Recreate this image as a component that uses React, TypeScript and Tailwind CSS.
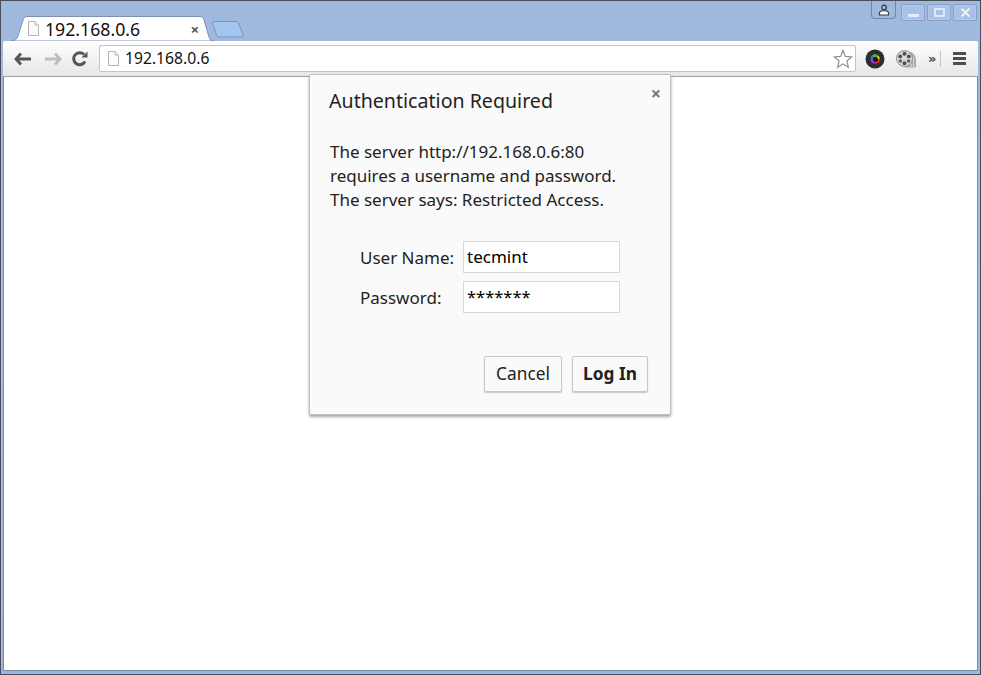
import React from "react";

const FileIcon = () => (
  <svg width="13" height="16" viewBox="0 0 13 16" className="shrink-0">
    <path d="M1.5 0.5H8L11.5 4V14.5H1.5Z" fill="#fbfbfb" stroke="#b4b4b4" />
    <path d="M8 0.5V4H11.5" fill="#eeeeee" stroke="#b4b4b4" />
  </svg>
);

const WinBtn = ({ children }: { children: React.ReactNode }) => (
  <div className="w-[24px] h-[17px] border border-[#86a0c9] rounded-[2px] bg-[#a9c1e6] shadow-[inset_0_0_0_1px_#b4c9ea] flex items-center justify-center">
    {children}
  </div>
);

export default function App() {
  return (
    <div className="w-[981px] h-[675px] overflow-hidden relative flex flex-col bg-gradient-to-b from-[#9fb8dd] via-[#a8c0e5] to-[#9db6dc] border border-[#4a4f57] font-['Noto_Sans',sans-serif]">
      <div className="h-[40px] shrink-0 flex relative">
        <div className="w-[203px] h-[25px] ml-[10px] mt-[15px] relative flex items-center pl-[16px] pr-[15px] pt-[2px] z-10">
          <svg width="203" height="25" viewBox="0 0 203 25" className="absolute left-0 top-0">
            <path d="M0 25C4 25 6 23 7 20L12 4C13 1 14 0.5 17 0.5H188C191 0.5 192 1 193 4L198 21C199 24 200 25 203 25Z" fill="#ffffff" stroke="#7b90b2" />
          </svg>
          <div className="relative flex items-center w-full">
            <FileIcon />
            <span className="ml-[5px] text-[17.7px] text-[#111] leading-none flex-1">192.168.0.6</span>
            <span className="text-[#555] font-bold text-[15px] leading-none">×</span>
          </div>
        </div>
        <svg width="33" height="17" viewBox="0 0 33 17" className="mt-[20px] -ml-[3px]">
          <path d="M1.5 2C1 1 1.5 0.5 3 0.5H25C26.5 0.5 27 1 27.5 2L32 14C32.5 15.5 32 16 30.5 16H8C6.5 16 6 15.5 5.5 14Z" fill="#a3c6f0" stroke="#7b93ba" />
        </svg>
        <div className="ml-auto mr-[3px] flex items-start">
          <div className="w-[25px] h-[18px] mr-[5px] border border-t-0 border-[#6f88b2] rounded-b-[4px] flex items-center justify-center">
            <svg width="12" height="12" viewBox="0 0 12 12">
              <circle cx="6" cy="3.5" r="2.3" fill="none" stroke="#343a44" strokeWidth="1.2" />
              <path d="M1.5 11V9C1.5 7.8 3 7 4.5 6.8H7.5C9 7 10.5 7.8 10.5 9V11Z" fill="#fff" stroke="#343a44" strokeWidth="1.1" />
            </svg>
          </div>
          <div className="flex gap-[2px] mt-[3px]">
            <WinBtn><div className="w-[11px] h-[3px] mt-[6px] bg-[#e6edf8]" /></WinBtn>
            <WinBtn><div className="w-[11px] h-[9px] border-2 border-[#dfe8f6] rounded-[1px]" /></WinBtn>
            <WinBtn>
              <svg width="11" height="9" viewBox="0 0 11 9"><path d="M1.5 0.5L9.5 8.5M9.5 0.5L1.5 8.5" stroke="#eef3fb" strokeWidth="2" /></svg>
            </WinBtn>
          </div>
        </div>
      </div>

      <div className="h-[36px] shrink-0 mx-[2px] bg-gradient-to-b from-white to-[#e6e6e6] border-b border-[#a0a0a0] rounded-t-[2px] flex items-center pl-[11px] pr-[9px]">
        <svg width="18" height="14" viewBox="0 0 18 14" className="mr-[12px]">
          <path d="M7 1.5L2 7L7 12.5M2.5 7H17" fill="none" stroke="#555" strokeWidth="2.8" />
        </svg>
        <svg width="18" height="14" viewBox="0 0 18 14" className="mr-[10px]">
          <path d="M11 1.5L16 7L11 12.5M15.5 7H1" fill="none" stroke="#bdbdbd" strokeWidth="2.8" />
        </svg>
        <svg width="16" height="16" viewBox="0 0 16 16" className="mr-[11px]">
          <path d="M13 10.5A6 6 0 1 1 12 3.5" fill="none" stroke="#555" strokeWidth="3" />
          <path d="M9.5 6.5L15.5 6.5L15.5 0.5Z" fill="#555" />
        </svg>
        <div className="w-[757px] h-[27px] bg-white border border-[#c4c4c4] rounded-[2px] flex items-center pl-[7px] pr-[2px]">
          <FileIcon />
          <span className="ml-[5px] text-[15.7px] text-[#111] leading-none flex-1">192.168.0.6</span>
          <svg width="20" height="20" viewBox="0 0 20 20">
            <path d="M10 1.5L12.4 7.4L18.8 7.9L13.9 12L15.4 18.3L10 14.9L4.6 18.3L6.1 12L1.2 7.9L7.6 7.4Z" fill="#fff" stroke="#8a8a8a" strokeWidth="1.1" />
          </svg>
        </div>
        <svg width="20" height="20" viewBox="0 0 20 20" className="ml-[9px]">
          <circle cx="10" cy="10" r="9.5" fill="#2b2d30" />
          <circle cx="10" cy="10" r="4.8" fill="#101214" />
          <path d="M10 10L6.5 6.7A4.8 4.8 0 0 1 13 6.2Z" fill="#39b54a" />
          <path d="M10 10L13 6.2A4.8 4.8 0 0 1 14.8 10.4Z" fill="#f2c318" />
          <path d="M10 10L14.8 10.4A4.8 4.8 0 0 1 10 14.8Z" fill="#e0362c" />
          <path d="M10 10L10 14.8A4.8 4.8 0 0 1 5.2 9.6Z" fill="#a53cc0" />
          <path d="M10 10L5.2 9.6A4.8 4.8 0 0 1 6.5 6.7Z" fill="#2a7de1" />
          <circle cx="10.5" cy="10.5" r="2.5" fill="#15171a" />
        </svg>
        <svg width="21" height="20" viewBox="0 0 21 20" className="ml-[11px]">
          <path d="M12 2.5C17 3 19.5 6 20 11L20 17C20 18 19 18.5 18 18.5L9 18.5Z" fill="#a9a9a9" />
          <path d="M15 6V18M17.5 8V18" stroke="#d9d9d9" strokeWidth="1" />
          <circle cx="8.5" cy="9.5" r="8" fill="#d8d8d8" stroke="#8f8f8f" />
          <circle cx="8.5" cy="4.8" r="2" fill="#4f4f4f" />
          <circle cx="8.5" cy="14.2" r="2" fill="#4f4f4f" />
          <circle cx="4.2" cy="7.4" r="1.9" fill="#4f4f4f" />
          <circle cx="12.8" cy="7.4" r="1.9" fill="#4f4f4f" />
          <circle cx="4.4" cy="12" r="1.7" fill="#5f5f5f" />
          <circle cx="12.6" cy="12" r="1.7" fill="#5f5f5f" />
        </svg>
        <span className="ml-[11px] text-[13px] leading-none text-[#444] font-bold font-['DejaVu_Sans',sans-serif]">»</span>
        <div className="ml-[4px] w-px h-[16px] bg-[#c4c4c4]" />
        <div className="ml-[12px] w-[13px] flex flex-col gap-[2px]">
          <div className="h-[3px] bg-[#4d4d4d]" />
          <div className="h-[3px] bg-[#4d4d4d]" />
          <div className="h-[3px] bg-[#4d4d4d]" />
        </div>
      </div>

      <div className="flex-1 mx-[2px] bg-white border-x border-b border-[#7b8aa6]" />
      <div className="h-[3px] shrink-0" />

      <div className="absolute left-[308px] top-[73px] w-[362px] h-[341px] bg-[#fafafa] border border-[#c0c0c0] rounded-[2px] shadow-[0_2px_3px_rgba(0,0,0,0.35)] flex flex-col pl-[19px] text-[#222]">
        <div className="flex mt-[12px] items-start">
          <h1 className="text-[19.6px] leading-[28px] font-normal flex-1">Authentication Required</h1>
          <span className="mr-[9px] text-[18px] leading-[12px] font-bold text-[#777]">×</span>
        </div>
        <div className="mt-[25px] ml-[1px] text-[17px] leading-[24px]">
          <p>The server http://192.168.0.6:80</p>
          <p>requires a username and password.</p>
          <p>The server says: Restricted Access.</p>
        </div>
        <div className="mt-[29px] ml-[31px] flex flex-col gap-[8px] text-[17px]">
          <div className="flex items-center">
            <label className="w-[103px] pt-[1px]">User Name:</label>
            <div className="w-[157px] h-[32px] bg-white border border-[#d8d8d8] pl-[3px] text-[17px] leading-[29px] text-black">tecmint</div>
          </div>
          <div className="flex items-center">
            <label className="w-[103px] pt-[1px]">Password:</label>
            <div className="w-[157px] h-[32px] bg-white border border-[#d8d8d8] pl-[3px] text-[16.5px] leading-[29px] text-black">*******</div>
          </div>
        </div>
        <div className="mt-[43px] mr-[22px] flex justify-end gap-[10px] text-[17.3px]">
          <div className="w-[78px] h-[36px] bg-[#fafafa] border border-[#c8c8c8] rounded-[2px] shadow-[0_1px_1px_rgba(0,0,0,0.2)] flex items-center justify-center">Cancel</div>
          <div className="w-[76px] h-[36px] bg-[#fafafa] border border-[#c8c8c8] rounded-[2px] shadow-[0_1px_1px_rgba(0,0,0,0.2)] flex items-center justify-center font-bold">Log In</div>
        </div>
      </div>
    </div>
  );
}
